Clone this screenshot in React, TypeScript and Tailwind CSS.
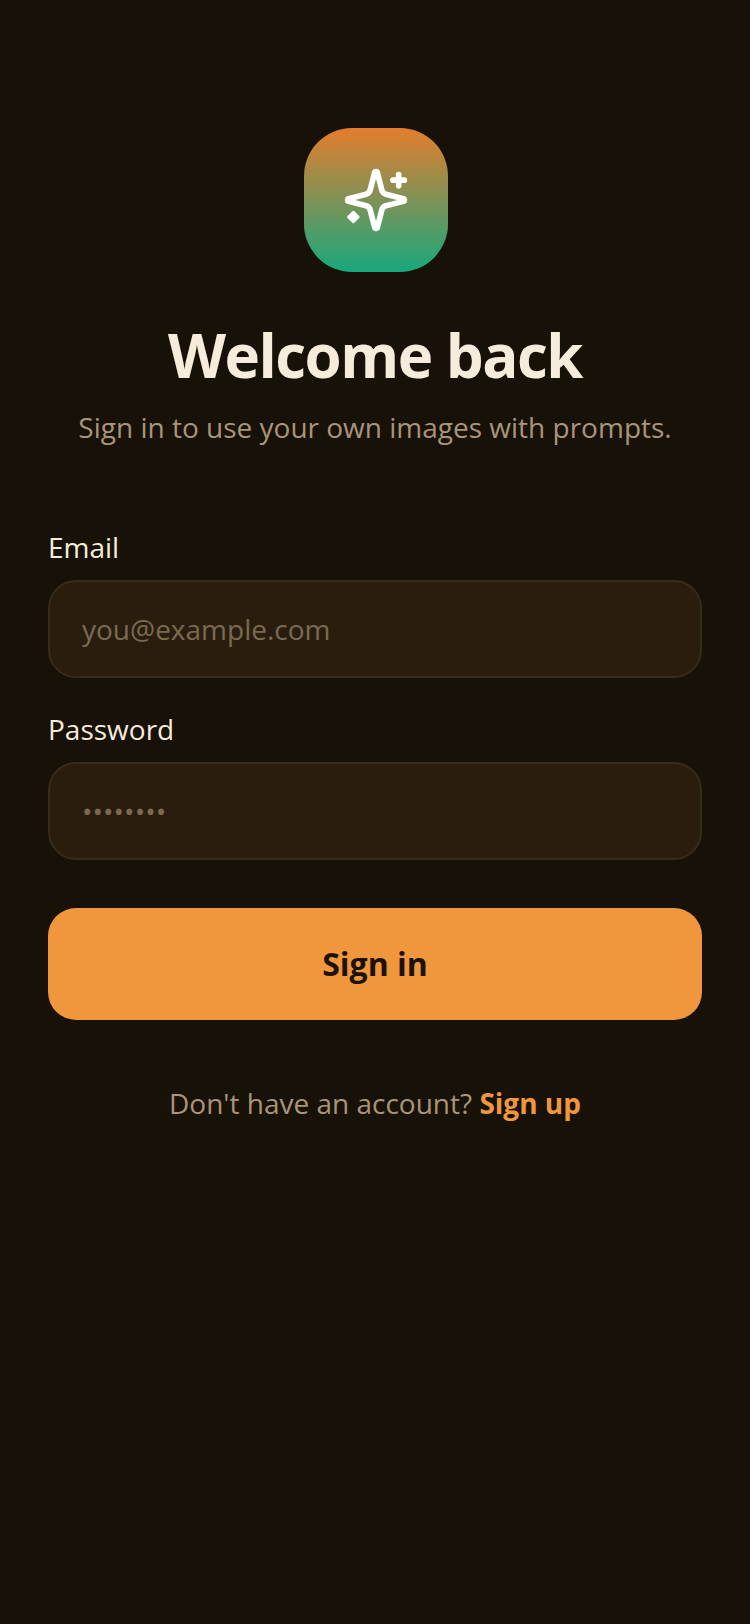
import React, { useState } from "react"

const SparkIcon = () => (
  <svg
    width="68"
    height="68"
    viewBox="0 0 24 24"
    fill="none"
    stroke="#ffffff"
    strokeWidth="2"
    strokeLinecap="round"
    strokeLinejoin="round"
  >
    <path d="M9.937 15.5A2 2 0 0 0 8.5 14.063l-6.135-1.582a.5.5 0 0 1 0-.962L8.5 9.936A2 2 0 0 0 9.937 8.5l1.582-6.135a.5.5 0 0 1 .963 0L14.063 8.5A2 2 0 0 0 15.5 9.937l6.135 1.581a.5.5 0 0 1 0 .964L15.5 14.063a2 2 0 0 0-1.437 1.437l-1.582 6.135a.5.5 0 0 1-.963 0z" />
    <path d="M20 3v4" />
    <path d="M22 5h-4" />
    {/* small diamond, lower left */}
    <path d="M4 16.3L5.7 18L4 19.7L2.3 18z" fill="#ffffff" strokeWidth="1" />
  </svg>
)

const App: React.FC = () => {
  const [email, setEmail] = useState<string>("")
  const [password, setPassword] = useState<string>("")

  return (
    <div className="min-h-[1624px] bg-[#181108] px-12 pt-32 font-['Open_Sans',sans-serif]">
      <div className="flex flex-col items-center">
        <div className="ml-[2px] flex h-36 w-36 items-center justify-center rounded-[48px] bg-linear-to-b/srgb from-[#e47d2e] to-[#18a87e]">
          <SparkIcon />
        </div>
        <h1 className="mt-[43px] text-[60px] leading-[80px] font-bold tracking-[-1.5px] text-[#f5ecdc]">
          Welcome back
        </h1>
        <p className="mt-[13px] text-[28px] leading-[38px] text-[#a8957a]">
          Sign in to use your own images with prompts.
        </p>
      </div>

      <form className="mt-[82px]" onSubmit={(e) => e.preventDefault()}>
        <label className="block text-[28px] leading-[38px] text-[#f5ecdc]">Email</label>
        <input
          type="email"
          value={email}
          onChange={(e) => setEmail(e.target.value)}
          placeholder="you@example.com"
          className="mt-[14px] block h-[98px] w-full rounded-[28px] border-2 border-[#382b1a] bg-[#2a1d0e] px-8 text-[28px] text-[#f5ecdc] outline-none placeholder:text-[#7a6a52]"
        />

        <label className="mt-8 block text-[28px] leading-[38px] text-[#f5ecdc]">Password</label>
        <input
          type="password"
          value={password}
          onChange={(e) => setPassword(e.target.value)}
          placeholder="••••••••"
          className="mt-[14px] block h-[98px] w-full rounded-[28px] border-2 border-[#382b1a] bg-[#2a1d0e] px-8 text-[28px] text-[#f5ecdc] outline-none placeholder:text-[#7a6a52]"
        />

        <button
          type="submit"
          className="mt-12 block h-[112px] w-full rounded-[28px] bg-[#f0973e] text-[32px] font-bold text-[#1c1206]"
        >
          Sign in
        </button>
      </form>

      <p className="mt-[64px] text-center text-[28px] leading-[38px] text-[#a8957a]">
        Don't have an account? <span className="font-bold text-[#f0973e]">Sign up</span>
      </p>
    </div>
  )
}

export default App
